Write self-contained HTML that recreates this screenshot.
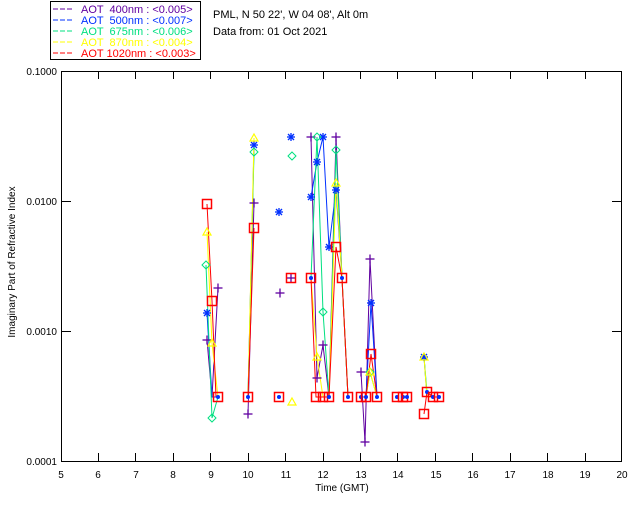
<!DOCTYPE html>
<html><head><style>
html,body{margin:0;padding:0;background:#fff;}
svg{display:block;font-family:"Liberation Sans",sans-serif;}
</style></head><body>
<svg width="640" height="512" viewBox="0 0 640 512" xmlns="http://www.w3.org/2000/svg">
<defs>
<g id="sq"><rect x="-4.5" y="-4.5" width="9" height="9" fill="none" stroke="#f00" stroke-width="1.5"/><circle r="2" fill="#0030ff"/></g>
<g id="sqe"><rect x="-4.5" y="-4.5" width="9" height="9" fill="none" stroke="#f00" stroke-width="1.5"/></g>
<g id="pl" stroke="#6000a0" stroke-width="1.3"><line x1="-4.5" y1="0" x2="4.5" y2="0"/><line x1="0" y1="-4.5" x2="0" y2="4.5"/></g>
<g id="st" stroke="#0030ff" stroke-width="1.3"><line x1="-4" y1="0" x2="4" y2="0"/><line x1="0" y1="-4" x2="0" y2="4"/><line x1="-3" y1="-3" x2="3" y2="3"/><line x1="-3" y1="3" x2="3" y2="-3"/></g>
<g id="di"><path d="M0,-4 L4,0 L0,4 L-4,0Z" fill="none" stroke="#00e080" stroke-width="1"/></g>
<g id="tr"><path d="M0,-4 L4,3 L-4,3Z" fill="none" stroke="#ff0" stroke-width="1.2"/></g>
</defs>
<rect x="50.5" y="1.5" width="150" height="58" fill="#fff" stroke="#000" stroke-width="1"/>
<g font-size="11">
<line x1="53" y1="9" x2="74" y2="9" stroke="#6000a0" stroke-dasharray="5,2"/><text x="81" y="13" fill="#6000a0" xml:space="preserve">AOT  400nm : &lt;0.005&gt;</text>
<line x1="53" y1="20" x2="74" y2="20" stroke="#0030ff" stroke-dasharray="5,2"/><text x="81" y="24" fill="#0030ff" xml:space="preserve">AOT  500nm : &lt;0.007&gt;</text>
<line x1="53" y1="31" x2="74" y2="31" stroke="#00e080" stroke-dasharray="5,2"/><text x="81" y="35" fill="#00e080" xml:space="preserve">AOT  675nm : &lt;0.006&gt;</text>
<line x1="53" y1="42" x2="74" y2="42" stroke="#ff0" stroke-dasharray="5,2"/><text x="81" y="46" fill="#ff0" xml:space="preserve">AOT  870nm : &lt;0.004&gt;</text>
<line x1="53" y1="53" x2="74" y2="53" stroke="#f00" stroke-dasharray="5,2"/><text x="81" y="57" fill="#f00" xml:space="preserve">AOT 1020nm : &lt;0.003&gt;</text>
<text x="213" y="18" fill="#000">PML, N 50 22', W 04 08', Alt 0m</text>
<text x="213" y="35" fill="#000">Data from: 01 Oct 2021</text>
</g>
<rect x="61.5" y="71.5" width="560" height="390" fill="none" stroke="#000" stroke-width="1"/>
<g stroke="#000" stroke-width="1">
<path d="M61,201.5h10M61,331.5h10M612,201.5h10M612,331.5h10"/>
<path d="M98.5,461v-8M135.5,461v-8M173.5,461v-8M210.5,461v-8M248.5,461v-8M285.5,461v-8M323.5,461v-8M360.5,461v-8M397.5,461v-8M435.5,461v-8M472.5,461v-8M510.5,461v-8M547.5,461v-8M585.5,461v-8"/>
<path d="M98.5,71v8M135.5,71v8M173.5,71v8M210.5,71v8M248.5,71v8M285.5,71v8M323.5,71v8M360.5,71v8M397.5,71v8M435.5,71v8M472.5,71v8M510.5,71v8M547.5,71v8M585.5,71v8"/>
</g>
<g font-size="10" fill="#000" text-anchor="end">
<text x="57" y="75">0.1000</text><text x="57" y="205">0.0100</text><text x="57" y="335">0.0010</text><text x="57" y="465">0.0001</text>
</g>
<g font-size="10" fill="#000" text-anchor="middle">
<text x="61" y="478">5</text><text x="98" y="478">6</text><text x="136" y="478">7</text><text x="173" y="478">8</text><text x="211" y="478">9</text><text x="248" y="478">10</text><text x="286" y="478">11</text><text x="323" y="478">12</text><text x="361" y="478">13</text><text x="398" y="478">14</text><text x="436" y="478">15</text><text x="473" y="478">16</text><text x="510" y="478">17</text><text x="548" y="478">18</text><text x="585" y="478">19</text><text x="622" y="478">20</text>
<text x="342" y="491">Time (GMT)</text>
<text transform="translate(15,262) rotate(-90)">Imaginary Part of Refractive Index</text>
</g>
<g fill="none" stroke-width="1">
<g stroke="#6000a0">
<polyline points="207,340 212,397 218,288"/><polyline points="248,414 254,203"/>
<polyline points="311,137 317,378 323,345 329,397 336,137 342,278 348,397"/>
<polyline points="361,372 365,442 370,259 377,397"/>
</g>
<g stroke="#0030ff">
<polyline points="207,313 212,397 218,397"/><polyline points="248,397 254,145"/>
<polyline points="311,197 317,162 323,137 329,247 336,190 342,278 348,397"/>
<polyline points="361,397 366,397 371,303 377,397"/><polyline points="424,357 427,397 439,397"/>
</g>
<g stroke="#00e080">
<polyline points="206,265 212,418 218,397"/><polyline points="248,397 254,152"/>
<polyline points="311,278 317,137 323,312 329,397 336,150 342,278 348,397"/>
<polyline points="361,397 366,397 370,372 377,397"/><polyline points="424,357 427,392 433,397"/>
</g>
<g stroke="#ff0">
<polyline points="207,232 212,343 218,397"/><polyline points="248,397 254,138"/>
<polyline points="311,278 317,357 323,397 329,397 336,183 342,278 348,397"/>
<polyline points="361,397 366,397 370,372 377,397"/><polyline points="424,357 427,397 439,397"/>
</g>
<g stroke="#f00">
<polyline points="207,204 212,301 216,397"/><polyline points="248,397 254,228"/>
<polyline points="311,278 316,397 329,397 336,247 342,278 348,397"/>
<polyline points="361,397 366,397 371,354 377,397"/><polyline points="424,414 427,392 433,397 439,397"/>
</g>
</g>
<use href="#pl" x="207" y="340"/><use href="#pl" x="218" y="288"/><use href="#pl" x="248" y="414"/><use href="#pl" x="254" y="203"/><use href="#pl" x="280" y="293"/><use href="#pl" x="311" y="137"/><use href="#pl" x="317" y="378"/><use href="#pl" x="323" y="345"/><use href="#pl" x="336" y="137"/><use href="#pl" x="361" y="372"/><use href="#pl" x="365" y="442"/><use href="#pl" x="370" y="259"/><use href="#pl" x="291" y="278"/>
<use href="#st" x="207" y="313"/><use href="#st" x="254" y="145"/><use href="#st" x="279" y="212"/><use href="#st" x="291" y="137"/><use href="#st" x="311" y="197"/><use href="#st" x="317" y="162"/><use href="#st" x="323" y="137"/><use href="#st" x="329" y="247"/><use href="#st" x="336" y="190"/><use href="#st" x="371" y="303"/><use href="#st" x="424" y="357"/>
<use href="#di" x="206" y="265"/><use href="#di" x="212" y="418"/><use href="#di" x="254" y="152"/><use href="#di" x="292" y="156"/><use href="#di" x="317" y="137"/><use href="#di" x="323" y="312"/><use href="#di" x="336" y="150"/><use href="#di" x="370" y="372"/>
<use href="#tr" x="207" y="232"/><use href="#tr" x="212" y="343"/><use href="#tr" x="254" y="138"/><use href="#tr" x="292" y="402"/><use href="#tr" x="317" y="357"/><use href="#tr" x="336" y="183"/><use href="#tr" x="370" y="372"/><use href="#tr" x="424" y="357"/>
<use href="#sqe" x="207" y="204"/><use href="#sqe" x="212" y="301"/><use href="#sq" x="218" y="397"/><use href="#sq" x="248" y="397"/><use href="#sqe" x="254" y="228"/><use href="#sq" x="279" y="397"/><use href="#sqe" x="291" y="278"/><use href="#sq" x="311" y="278"/><use href="#sqe" x="316" y="397"/><use href="#sqe" x="323" y="397"/><use href="#sq" x="329" y="397"/><use href="#sqe" x="336" y="247"/><use href="#sq" x="342" y="278"/><use href="#sq" x="348" y="397"/><use href="#sq" x="361" y="397"/><use href="#sq" x="366" y="397"/><use href="#sqe" x="371" y="354"/><use href="#sq" x="377" y="397"/><use href="#sq" x="397" y="397"/><use href="#sq" x="403" y="397"/><use href="#sq" x="407" y="397"/><use href="#sqe" x="424" y="414"/><use href="#sq" x="427" y="392"/><use href="#sq" x="433" y="397"/><use href="#sq" x="439" y="397"/>
</svg>
</body></html>
